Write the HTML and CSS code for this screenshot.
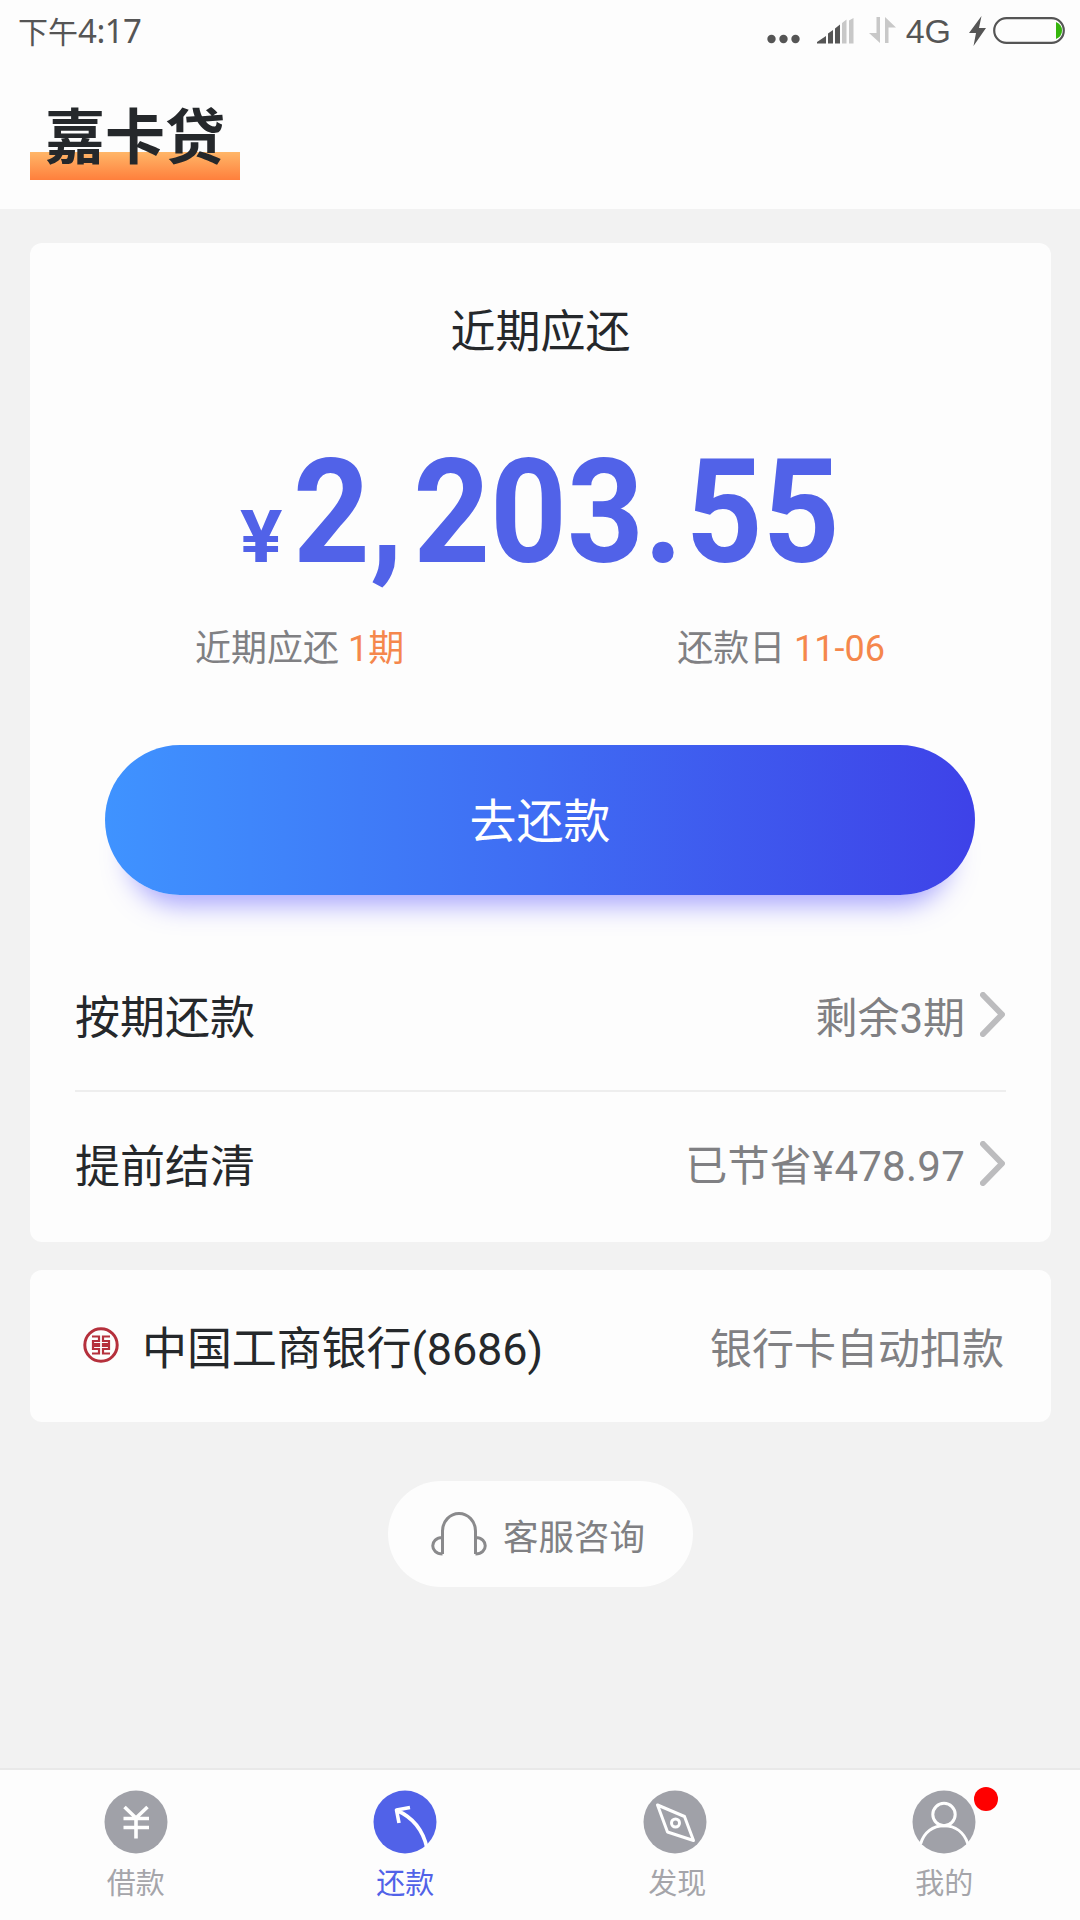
FILE: index.html
```html
<!DOCTYPE html>
<html lang="zh-CN">
<head>
<meta charset="utf-8">
<title>嘉卡贷</title>
<link rel="stylesheet" href="styles.css">
</head>
<body>
<header class="top">
  <div class="status">
    <span class="clock">下午<span class="clock-digits">4:17</span></span>
    <div class="status-icons">
      <svg class="dots" width="34" height="10" viewBox="0 0 34 10"><circle cx="4.500" cy="5" r="4.200"/><circle cx="16.500" cy="5" r="4.200"/><circle cx="28.500" cy="5" r="4.200"/></svg>
      <svg class="signal" width="38" height="28" viewBox="0 0 38 28"><path d="M0 26.500V25l9-6v7.500zM11 16.500l5-3.500v13.500h-5zM18 11.500l5-4v19h-5z"/><path class="pale" d="M25 6l4.500-3.500v24h-4.500zM32 3.500l4.500-2.500v25.500h-4.500z"/></svg>
      <svg class="arrows" width="28" height="28" viewBox="0 0 28 28"><path class="pale" d="M7.500 1h3.500v26L0 17h7.500zM16 27V1l11 10.500h-7.500V27z"/></svg>
      <span class="network">4G</span>
      <svg class="bolt" width="17" height="30" viewBox="0 0 17 30"><path d="M12.500 0L0 17h7L4.500 30 17 12h-7z"/></svg>
      <svg class="battery" width="72" height="28" viewBox="0 0 72 28"><rect x="1.200" y="1.200" width="69.600" height="24.600" rx="12.300" fill="none" stroke="#555" stroke-width="2.200"/><path fill="#35b50c" d="M63 5q6 2.500 6 8.500t-6 8.500z"/></svg>
    </div>
  </div>
  <h1 class="brand">嘉卡贷</h1>
</header>

<main class="content">
  <section class="card bill">
    <h2 class="bill-title">近期应还</h2>
    <div class="amount"><span class="currency">¥</span><span class="figure">2<span class="comma">,</span>203<span class="point">.</span>55</span></div>
    <div class="facts">
      <span>近期应还 <em>1期</em></span>
      <span>还款日 <em>11-06</em></span>
    </div>
    <button class="pay">去还款</button>
    <div class="row">
      <span class="label">按期还款</span>
      <span class="value">剩余3期</span>
      <svg class="chevron" width="25" height="45" viewBox="0 0 25 45"><path d="M3 3l19 19.500L3 42"/></svg>
    </div>
    <div class="row">
      <span class="label">提前结清</span>
      <span class="value saved">已节省¥478.97</span>
      <svg class="chevron" width="25" height="45" viewBox="0 0 25 45"><path d="M3 3l19 19.500L3 42"/></svg>
    </div>
  </section>

  <section class="card bank">
    <svg class="bank-logo" width="36" height="38" viewBox="0 0 36 38"><g fill="none" stroke="#b5303c"><circle cx="18" cy="19" r="16.200" stroke-width="3"/><path stroke-width="2.200" d="M9 10.500h7v4.500h-6v3h6v2h-6v3h6v4.500h-7M27 10.500h-7v4.500h6v3h-6v2h6v3h-6v4.500h7"/></g></svg>
    <span class="label bank-name">中国工商银行(8686)</span>
    <span class="value">银行卡自动扣款</span>
  </section>

  <a class="service">
    <svg width="56" height="44" viewBox="0 0 56 44"><path d="M11.500 42V19a16.500 17.500 0 0 1 33 0v23M11.500 42C-1.500 42-1.500 25.500 11.500 25.500M44.500 42c13 0 13-16.500 0-16.500"/></svg>
    <span>客服咨询</span>
  </a>
</main>

<nav class="tabs">
  <a class="tab">
    <svg width="64" height="64" viewBox="0 0 64 64"><circle class="disc" cx="32" cy="32" r="31.500"/><path class="line thick" d="M20.500 17L32 28 43.500 17M19.500 28.500h25.500M19.500 37.500h25.500M32 28v20.500"/></svg>
    <span>借款</span>
  </a>
  <a class="tab active">
    <svg width="64" height="64" viewBox="0 0 64 64"><circle class="disc" cx="32" cy="32" r="31.500"/><path class="line thick" d="M26 33L23.500 20 37 17.500M24 20.500Q48 31 54 58"/></svg>
    <span>还款</span>
  </a>
  <a class="tab discover">
    <svg width="64" height="64" viewBox="0 0 64 64"><circle class="disc" cx="32" cy="32" r="31.500"/><path class="line" d="M14.500 15L41.500 26.500 50.500 50.500 24.500 42z"/><circle class="line" cx="32.500" cy="33" r="4"/></svg>
    <span>发现</span>
  </a>
  <a class="tab">
    <svg width="64" height="64" viewBox="0 0 64 64"><circle class="disc" cx="32" cy="32" r="31.500"/><circle class="line" cx="32" cy="24.500" r="11.200"/><path class="line" d="M8.500 54C12 42 21 35.700 32 35.700S52 42 56 54"/></svg>
    <span>我的</span>
    <i class="badge"></i>
  </a>
</nav>
</body>
</html>
```
FILE: styles.css
```css
* {
  box-sizing: border-box;
}

body {
  margin: 0;
  width: 1080px;
  height: 1920px;
  display: flex;
  flex-direction: column;
  overflow: hidden;
  background: #f2f2f2;
  color: #25282b;
  font-family: Roboto, "Noto Sans CJK SC", sans-serif;
}

svg {
  display: block;
  flex: none;
}

.top {
  height: 209px;
  background: #fdfdfd;
}

.status {
  height: 62px;
  padding: 0 15px 0 18px;
  display: flex;
  justify-content: space-between;
  color: #555;
  line-height: 62px;
}

.clock {
  font-size: 30px;
}

.clock-digits {
  font-family: "Noto Sans", sans-serif;
  font-size: 33px;
  letter-spacing: -0.5px;
}

.status-icons {
  display: flex;
  align-items: flex-start;
  fill: #555;
}

.pale {
  fill: #c8c8c8;
}

.dots {
  margin: 34px 16px 0 0;
}

.signal {
  margin: 17px 14px 0 0;
}

.arrows {
  margin: 16px 9px 0 0;
}

.network {
  font-family: "Liberation Sans", Arial, sans-serif;
  font-size: 34px;
}

.bolt {
  margin: 16px 7px 0 18px;
}

.battery {
  margin-top: 17px;
}

.brand {
  width: 210px;
  height: 88px;
  margin: 30px 0 0 30px;
  padding-left: 15px;
  background: linear-gradient(#ffb668, #ff7f3c) bottom / 100% 28px no-repeat;
  font-size: 60px;
  font-weight: 700;
  line-height: 94px;
}

.content {
  flex: 1;
  padding: 34px 29px 0 30px;
  display: flex;
  flex-direction: column;
  align-items: stretch;
}

.card {
  padding: 0 45px;
  background: #fdfdfd;
  border-radius: 12px;
}

.bill {
  height: 999px;
  padding-top: 58px;
}

.bill-title {
  margin: 0;
  font-size: 45px;
  font-weight: 400;
  line-height: 64px;
  text-align: center;
}

.amount {
  height: 190px;
  margin-top: 52px;
  padding-left: 165px;
  display: flex;
  align-items: baseline;
  color: #5162e8;
  font-weight: 700;
  line-height: 190px;
  white-space: nowrap;
}

.currency {
  width: 53px;
  font-size: 72px;
  transform: scaleX(1.1);
  transform-origin: left;
}

.figure {
  font-size: 145px;
  transform: scaleX(0.925);
  transform-origin: left;
}

.comma {
  letter-spacing: 11px;
}

.point {
  letter-spacing: 3px;
}

.facts {
  margin: 17px 121px 0 120px;
  display: flex;
  justify-content: space-between;
  color: #808083;
  font-size: 36px;
  line-height: 50px;
}

.facts em {
  color: #f5874c;
  font-style: normal;
}

.pay {
  display: block;
  width: 870px;
  height: 150px;
  margin: 71px 0 45px 30px;
  padding: 3px 0 0;
  border: 0;
  border-radius: 75px;
  background: linear-gradient(90deg, #3f93ff, #3f6cf3 50%, #3e42e8);
  box-shadow: 0 34px 26px -24px rgba(86, 80, 255, 0.5);
  color: #fff;
  font: 400 47px/147px Roboto, "Noto Sans CJK SC", sans-serif;
}

.row {
  height: 150px;
  display: flex;
  align-items: center;
  padding-bottom: 1px;
}

.row + .row {
  border-top: 2px solid #eee;
  padding-bottom: 5px;
}

.label {
  margin-right: auto;
  font-size: 45px;
}

.value {
  color: #808083;
  font-size: 42px;
}

.saved {
  letter-spacing: 0.25px;
  padding-bottom: 3px;
}

.chevron {
  margin-left: 15px;
  margin-right: 1px;
  fill: none;
  stroke: #bcbcbe;
  stroke-width: 6;
  stroke-linecap: round;
  stroke-linejoin: round;
}

.bank {
  height: 152px;
  margin-top: 28px;
  padding: 0 47px 2px 53px;
  display: flex;
  align-items: center;
}

.bank-name {
  margin-left: 23px;
  letter-spacing: -0.1px;
}

.service {
  width: 305px;
  height: 106px;
  margin-top: 59px;
  padding-left: 43px;
  align-self: center;
  display: flex;
  align-items: center;
  gap: 16px;
  border-radius: 53px;
  background: #fdfdfd;
  color: #808083;
  font-size: 35.500px;
}

.service svg {
  fill: none;
  stroke: #8a8a8c;
  stroke-width: 3;
}

.tabs {
  height: 152px;
  padding: 20px 0 0 1px;
  display: grid;
  grid-template-columns: repeat(4, 269.500px);
  border-top: 2px solid #e9e9e9;
  background: #fdfdfd;
}

.tab {
  position: relative;
  display: flex;
  flex-direction: column;
  align-items: center;
  color: #a5a5aa;
  font-size: 29px;
  line-height: 40px;
}

.tab span {
  margin-top: 10px;
}

.active {
  color: #5162e8;
}

.discover span {
  margin-left: 5px;
}

.disc {
  fill: #a0a1a8;
}

.active .disc {
  fill: #5162e8;
}

.line {
  fill: none;
  stroke: #fff;
  stroke-width: 3;
  stroke-linejoin: round;
}

.thick {
  stroke-width: 3.600;
}

.badge {
  position: absolute;
  top: -3px;
  left: 164px;
  width: 24px;
  height: 24px;
  border-radius: 50%;
  background: #f00;
}
```
